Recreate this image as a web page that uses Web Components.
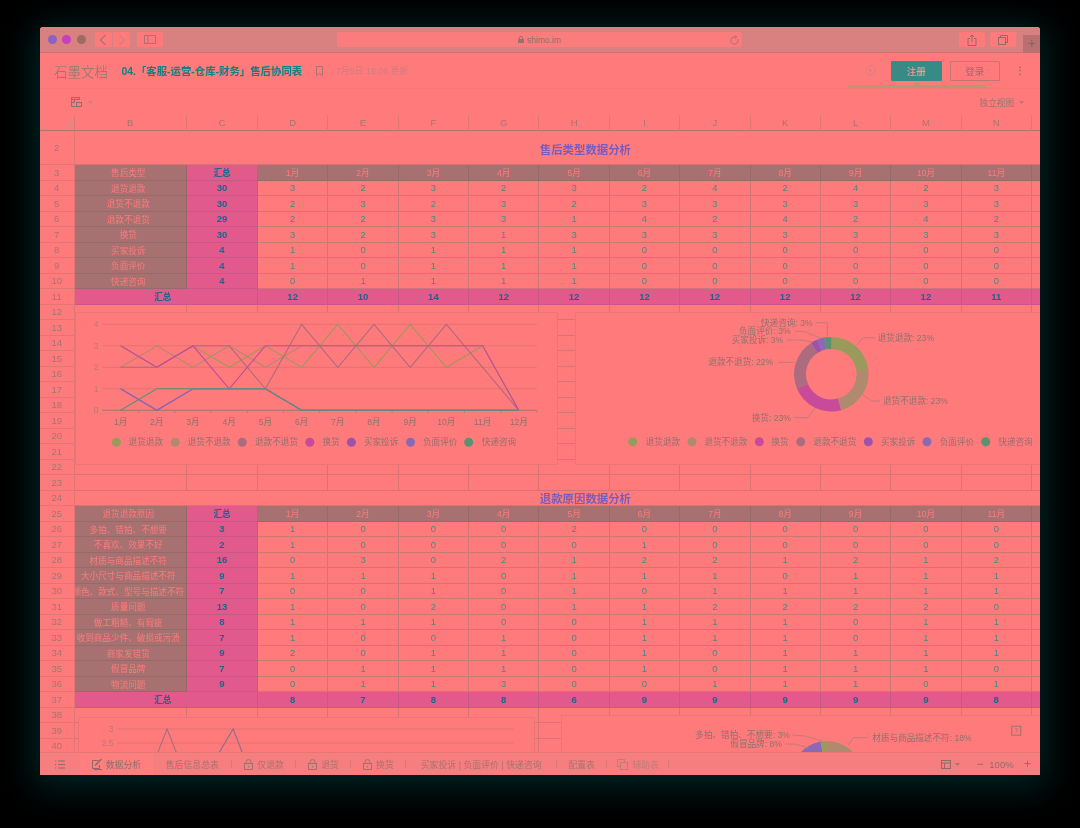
<!DOCTYPE html>
<html lang="zh">
<head>
<meta charset="utf-8">
<title>售后协同表</title>
<style>
  html, body { margin: 0; height: 100%; background: #000; overflow: hidden; }
  body {
    padding: 27px 40px 0;
    box-sizing: border-box;
    font-family: "Liberation Sans", "Noto Sans CJK SC", sans-serif;
  }
</style>
</head>
<body>
<browser-window>
  <safari-bar></safari-bar>
  <doc-header></doc-header>
  <sheet-toolbar></sheet-toolbar>
  <sheet-grid></sheet-grid>
  <sheet-tabs></sheet-tabs>
</browser-window>

<script>
const icons = {
  back: '<svg width="8" height="12" viewBox="0 0 8 12" fill="none" stroke="#a87272" stroke-width="1.2"><path d="M6.5 1 1.5 6l5 5"/></svg>',
  forward: '<svg width="8" height="12" viewBox="0 0 8 12" fill="none" stroke="#cf8080" stroke-width="1.2"><path d="M1.5 1l5 5-5 5"/></svg>',
  sidebar: '<svg width="12" height="10" viewBox="0 0 12 10" fill="none" stroke="#a87272"><rect x=".5" y=".5" width="11" height="8" /><path d="M4 .5v8"/></svg>',
  lock: '<svg width="6" height="7" viewBox="0 0 6 7" fill="#9a7070"><path d="M1 3V2a2 2 0 0 1 4 0v1h1v4H0V3zm1 0h2V2a1 1 0 0 0-2 0z"/></svg>',
  reload: '<svg width="9" height="10" viewBox="0 0 9 10" fill="none" stroke="#a87272"><path d="M7.7 4.2A3.6 3.6 0 1 1 4.5 2h2"/><path d="M5 .5 6.6 2 5 3.5"/></svg>',
  share: '<svg width="10" height="12" viewBox="0 0 10 12" fill="none" stroke="#8f6c6c"><path d="M3 4.5H1v7h8v-7H7M5 8V1M3 2.8 5 1l2 1.8"/></svg>',
  tabs: '<svg width="10" height="10" viewBox="0 0 10 10" fill="none" stroke="#8f6c6c"><rect x=".5" y="2.5" width="7" height="7"/><path d="M2.5 2.5v-2h7v7h-2"/></svg>',
  play: '<svg width="11" height="11" viewBox="0 0 11 11" fill="none" stroke="#d88080"><circle cx="5.5" cy="5.5" r="4.8"/><path d="M4.4 3.6 7 5.5 4.4 7.4z"/></svg>',
  bookmark: '<svg width="7" height="10" viewBox="0 0 7 10" fill="none" stroke="#a87272"><path d="M.5.5h6v9L3.5 7.6.5 9.5z"/></svg>',
  sheet: '<svg width="11" height="10" viewBox="0 0 11 10" fill="none" stroke="#8c7070"><path d="M.5.5h8v2h-8zM.5 2.5v7h4M3.5 2.5v3h-3"/><rect x="5.5" y="5.5" width="5" height="4"/></svg>',
  menu: '<svg width="10" height="9" viewBox="0 0 10 9" fill="none" stroke="#8f6c6c"><path d="M3 1h7M3 4.5h7M3 8h7M0 1h1.2M0 4.5h1.2M0 8h1.2"/></svg>',
  chart: '<svg width="11" height="12" viewBox="0 0 11 12" fill="none" stroke="#8a6c6c"><path d="M6.500 2.500H.5v8h7V7"/><path d="M3 7.500 9.500 1" stroke-width="1.500"/><path d="M2 11.500h8" stroke-width="1"/></svg>',
  padlock: '<svg width="9" height="11" viewBox="0 0 9 11" fill="none" stroke="#a37070"><rect x=".5" y="4.500" width="8" height="6"/><path d="M2 4.500V3a2.500 2.500 0 0 1 5 0v1.500M4.500 7v1.500"/></svg>',
  copy: '<svg width="11" height="11" viewBox="0 0 11 11" fill="none" stroke="#c27a7a"><rect x=".5" y=".5" width="7" height="7"/><rect x="3.500" y="3.500" width="7" height="7" fill="#f67e7e"/></svg>',
  grid: '<svg width="10" height="9" viewBox="0 0 10 9" fill="none" stroke="#8f6c6c"><rect x=".5" y=".5" width="9" height="8"/><path d="M.5 3h9M3.500 3v5.500"/></svg>'
};

const caret = color => `<svg width="5" height="3" viewBox="0 0 5 3" fill="${color}"><path d="M0 0h5L2.500 3z"/></svg>`;

const windowTemplate = document.createElement('template');
windowTemplate.innerHTML = `
  <style>
    :host {
      display: flex;
      flex-direction: column;
      width: 1000px;
      height: 748px;
      background: #ff7b7b;
      overflow: hidden;
      border-radius: 3px 3px 0 0;
      box-shadow: 0 6px 34px 6px #012526;
      filter: blur(.3px);
    }
  </style>
  <slot></slot>
`;

window.customElements.define('browser-window', class BrowserWindow extends HTMLElement {
  constructor() {
    super();
    this.attachShadow({ mode: 'open' }).appendChild(windowTemplate.content.cloneNode(true));
  }
});

const barTemplate = document.createElement('template');
barTemplate.innerHTML = `
  <style>
    :host {
      display: flex;
      align-items: center;
      flex: none;
      height: 26px;
      box-sizing: border-box;
      border-bottom: 1px solid #c87272;
      background: #d98181;
      padding-left: 8px;
      position: relative;
      font-size: 8.500px;
      color: #8f6c6c;
    }
    .light { width: 9px; height: 9px; border-radius: 50%; margin-right: 5.300px; }
    .btn {
      display: flex; align-items: center; justify-content: center;
      height: 15px; background: #ff7b7b; border-radius: 2.500px;
    }
    .address {
      display: flex; align-items: center; justify-content: center; gap: 3px;
      width: 405px; margin-left: 174px; height: 15px; position: relative;
      background: #fa7c7c; border-radius: 2.500px;
    }
    .address svg:last-child { position: absolute; right: 3px; top: 2.500px; }
    .plus {
      position: absolute; right: 0; top: 8px; width: 17px; height: 18px;
      background: #b87070; color: #7f6464; font-size: 14px; line-height: 17px; text-align: center;
    }
  </style>
  <span class="light" style="background:#8a62c2"></span>
  <span class="light" style="background:#c83fbd"></span>
  <span class="light" style="background:#9c6b62;margin-right:9px"></span>
  <span class="btn" style="width:17px">${icons.back}</span>
  <span class="btn" style="width:17px;margin-left:1.500px">${icons.forward}</span>
  <span class="btn" style="width:26px;margin-left:7px">${icons.sidebar}</span>
  <span class="address">${icons.lock}<span>shimo.im</span>${icons.reload}</span>
  <span class="btn" style="width:26px;margin-left:217px">${icons.share}</span>
  <span class="btn" style="width:26px;margin-left:5px">${icons.tabs}</span>
  <span class="plus">+</span>
`;

window.customElements.define('safari-bar', class SafariBar extends HTMLElement {
  constructor() {
    super();
    this.attachShadow({ mode: 'open' }).appendChild(barTemplate.content.cloneNode(true));
  }
});

const headerTemplate = document.createElement('template');
headerTemplate.innerHTML = `
  <style>
    :host {
      display: flex;
      align-items: center;
      flex: none;
      height: 36px;
      box-sizing: border-box;
      border-bottom: 1px solid #f27a7a;
      padding-left: 14px;
      position: relative;
    }
    .logo { font-size: 13.500px; font-weight: 300; color: #7d7a72; width: 67.500px; }
    .title { font-size: 10.400px; font-weight: 700; color: #0f8183; white-space: nowrap; width: 194px; }
    .bookmark { display: flex; width: 20.500px; }
    .date { font-size: 8.850px; color: #cf7d7d; white-space: nowrap; }
    .right { margin-left: auto; display: flex; align-items: center; }
    .watch {
      display: flex; align-items: center; justify-content: center;
      width: 27px; height: 20px; margin-right: 7px; border-radius: 2px; background: #fc7c7c;
    }
    .btn {
      display: flex; align-items: center; justify-content: center; box-sizing: border-box;
      width: 50.500px; height: 20px; font-size: 9.500px; border-radius: 1px;
    }
    .signup { background: #378b86; color: #f59a94; font-weight: 500; }
    .login { margin-left: 8px; border: 1px solid #c47474; color: #8d6f6f; }
    .more { width: 40px; text-align: center; font-size: 10px; color: #8d6f6f; font-weight: 700; line-height: 1; }
    .tip {
      position: absolute; left: 808px; bottom: 0; width: 139px; height: 3px; background: #b39a70;
    }
    .tip::after {
      content: ""; position: absolute; left: 65px; top: -3px;
      border: 4px solid transparent; border-top: 0; border-bottom: 3px solid #b39a70;
    }
  </style>
  <span class="logo">石墨文档</span>
  <span class="title">04.「客服-运营-仓库-财务」售后协同表</span>
  <span class="bookmark">${icons.bookmark}</span>
  <span class="date">7月5日 19:06 更新</span>
  <span class="right">
    <span class="watch">${icons.play}</span>
    <span class="btn signup">注册</span>
    <span class="btn login">登录</span>
    <span class="more">⋮</span>
  </span>
  <span class="tip"></span>
`;

window.customElements.define('doc-header', class DocHeader extends HTMLElement {
  constructor() {
    super();
    this.attachShadow({ mode: 'open' }).appendChild(headerTemplate.content.cloneNode(true));
  }
});

const toolbarTemplate = document.createElement('template');
toolbarTemplate.innerHTML = `
  <style>
    :host {
      display: flex;
      align-items: center;
      flex: none;
      height: 26px;
      padding: 0 16px 0 31px;
      font-size: 8.600px;
      color: #a17070;
    }
    span { display: flex; align-items: center; gap: 6px; }
    .view { margin-left: auto; gap: 5px; }
  </style>
  <span>${icons.sheet}${caret('#c88080')}</span>
  <span class="view">独立视图${caret('#b87676')}</span>
`;

window.customElements.define('sheet-toolbar', class SheetToolbar extends HTMLElement {
  constructor() {
    super();
    this.attachShadow({ mode: 'open' }).appendChild(toolbarTemplate.content.cloneNode(true));
  }
});

const seriesColors = ['#9a9a5c', '#b08a6e', '#ad6b80', '#c84a9a', '#a052aa', '#8a6ab4', '#5a9272'];

// 图表坐标直接用页面坐标，viewBox 偏移到图表框的位置
const svgFrame = (x, y, w, h, body) =>
  `<svg xmlns="http://www.w3.org/2000/svg" width="${w}" height="${h}" viewBox="${x} ${y} ${w} ${h}">${body}</svg>`;

const svgLabel = (x, y, text, extra = '') =>
  `<text x="${x}" y="${y}" dominant-baseline="central" ${extra}>${text}</text>`;

const frameStyle = `
  :host {
    display: block;
    position: absolute;
    box-sizing: border-box;
    background: #ff7b7b;
    border: 1px solid #ea7676;
    overflow: hidden;
  }
  svg { display: block; position: absolute; left: 0; top: 0; }
  text { font-size: 8.600px; fill: #8f7070; }
`;

class ChartBox extends HTMLElement {
  place(x, y, w, h) {
    this.style.left = `${x - 40}px`;
    this.style.top = `${y - 115}px`;
    this.style.width = `${w}px`;
    this.style.height = `${h}px`;
    return [x + 1, y + 1, w, h];
  }
}

window.customElements.define('line-chart', class LineChart extends ChartBox {
  render({ box, legend, series }) {
    const [x, y, w, h] = this.place(...box);
    const { top, unit, ticks, left, step, count, monthY, lineColors } = series;
    const yOf = v => top + (ticks[0] - v) * unit;
    const xOf = i => left + step * (i + 0.5);
    let body = '';
    ticks.forEach(t => {
      body += `<path d="M${left} ${yOf(t)}H${left + step * count}" stroke="#e07474" fill="none"/>`;
      body += svgLabel(left - 4, yOf(t), t, 'text-anchor="end" style="fill:#b97878"');
    });
    if (monthY) {
      body += `<path d="M${left} ${yOf(0)}H${left + step * count}" stroke="#b07272" fill="none"/>`;
      for (let i = 0; i < count; i++) {
        body += `<path d="M${left + step * (i + 1)} ${yOf(0)}v3" stroke="#c87676" fill="none"/>`;
        body += svgLabel(xOf(i), monthY, `${i + 1}月`, 'text-anchor="middle"');
      }
    }
    series.data.forEach((row, s) => {
      const pts = row.map((v, i) => `${xOf(i).toFixed(1)},${yOf(v).toFixed(1)}`).join(' ');
      body += `<polyline points="${pts}" fill="none" stroke="${lineColors[s]}" stroke-width="1.100"/>`;
    });
    legend.forEach(([cx, tx, color, name]) => {
      body += `<circle cx="${cx}" cy="${legend.y}" r="4.500" fill="${color}"/>`;
      body += svgLabel(tx, legend.y, name);
    });
    this.shadowRoot.innerHTML = `<style>${frameStyle}</style>${svgFrame(x, y, w, h, body)}`;
  }

  constructor() {
    super();
    this.attachShadow({ mode: 'open' });
  }
});

const arc = (cx, cy, R, r, a0, a1, color) => {
  const p = (rad, a) => {
    const t = (a - 90) * Math.PI / 180;
    return `${(cx + rad * Math.cos(t)).toFixed(2)} ${(cy + rad * Math.sin(t)).toFixed(2)}`;
  };
  const big = a1 - a0 > 180 ? 1 : 0;
  return `<path fill="${color}" d="M${p(R, a0)}A${R} ${R} 0 ${big} 1 ${p(R, a1)}L${p(r, a1)}A${r} ${r} 0 ${big} 0 ${p(r, a0)}Z"/>`;
};

window.customElements.define('donut-chart', class DonutChart extends ChartBox {
  render({ box, ring, slices, labels, legend, help }) {
    const [x, y, w, h] = this.place(...box);
    const [cx, cy, R, r] = ring;
    let body = '';
    slices.forEach(([a0, a1, color]) => { body += arc(cx, cy, R, r, a0, a1, color); });
    labels.forEach(([tx, ty, text, line]) => {
      body += `<path d="${line}" fill="none" stroke="#c27a7a"/>`;
      body += svgLabel(tx, ty, text);
    });
    (legend || []).forEach(([lx, tx, color, name]) => {
      body += `<circle cx="${lx}" cy="${legend.y}" r="4.500" fill="${color}"/>`;
      body += svgLabel(tx, legend.y, name);
    });
    if (help) {
      body += `<rect x="${help[0] - 4.500}" y="${help[1] - 4.500}" width="9" height="9" fill="none" stroke="#9c7070"/>`;
      body += svgLabel(help[0], help[1], '?', 'text-anchor="middle" style="font-size:7px"');
    }
    this.shadowRoot.innerHTML = `<style>${frameStyle}</style>${svgFrame(x, y, w, h, body)}`;
  }

  constructor() {
    super();
    this.attachShadow({ mode: 'open' });
  }
});

const gridTemplate = document.createElement('template');
gridTemplate.innerHTML = `
  <style>
    :host {
      display: block;
      flex: 1;
      min-height: 0;
      position: relative;
      overflow: hidden;
      font-size: 8.600px;
    }
    .sheet {
      display: grid;
      grid-template-columns: 34.500px 112.500px 71px repeat(12, 70.360px);
      grid-template-rows: 16px 34px repeat(40, 15.500px);
      width: 1100px;
    }
    .sheet > div {
      display: flex;
      align-items: center;
      justify-content: center;
      box-sizing: border-box;
      border-right: 1px solid #d97373;
      border-bottom: 1px solid #d97373;
      white-space: nowrap;
      overflow: hidden;
      min-width: 0;
    }
    .sheet > .head { color: #a67272; font-size: 9.500px; border-color: #e07676; }
    .sheet > .head.col { border-bottom-color: #b07272; }
    .sheet > .corner { border-bottom-color: #b07272; position: relative; }
    .corner::after {
      content: ""; position: absolute; right: 1px; bottom: 1px;
      border-left: 11px solid transparent; border-bottom: 11px solid #ec8383;
    }
    .sheet > .title { grid-column: 2 / -1; padding-right: 5px; font-size: 11.400px; font-weight: 700; color: #7a5cbc; }
    .sheet > .title.first { padding-top: 3px; }
    .sheet > .dark { background: #a87171; color: #ff7a7a; border-color: #976a6a; }
    .sheet > .dark.label { padding-right: 4px; }
    .sheet > .pink { background: #e25a8c; color: #1e6490; font-weight: 700; border-color: #cb5788; font-size: 9.600px; }
    .sheet > .pink.cjk { font-size: 8.600px; }
    .sheet > .merged { grid-column: span 2; padding-right: 6px; }
    .sheet > .num { color: #4e8682; font-size: 9.500px; border-color: #cd7676; }
  </style>
  <div class="sheet"></div>
  <line-chart id="lineA"></line-chart>
  <donut-chart id="pieA"></donut-chart>
  <line-chart id="lineB"></line-chart>
  <donut-chart id="pieB"></donut-chart>
`;

const columns = ['B', 'C', 'D', 'E', 'F', 'G', 'H', 'I', 'J', 'K', 'L', 'M', 'N', ''];

const tableA = {
  head: '售后类型',
  title: '售后类型数据分析',
  rows: [
    ['退货退款', 30, 3, 2, 3, 2, 3, 2, 4, 2, 4, 2, 3],
    ['退货不退款', 30, 2, 3, 2, 3, 2, 3, 3, 3, 3, 3, 3],
    ['退款不退货', 29, 2, 2, 3, 3, 1, 4, 2, 4, 2, 4, 2],
    ['换货', 30, 3, 2, 3, 1, 3, 3, 3, 3, 3, 3, 3],
    ['买家投诉', 4, 1, 0, 1, 1, 1, 0, 0, 0, 0, 0, 0],
    ['负面评价', 4, 1, 0, 1, 1, 1, 0, 0, 0, 0, 0, 0],
    ['快递咨询', 4, 0, 1, 1, 1, 1, 0, 0, 0, 0, 0, 0]
  ],
  total: [12, 10, 14, 12, 12, 12, 12, 12, 12, 12, 11]
};

const tableB = {
  head: '退货退款原因',
  title: '退款原因数据分析',
  rows: [
    ['多拍、错拍、不想要', 3, 1, 0, 0, 0, 2, 0, 0, 0, 0, 0, 0],
    ['不喜欢、效果不好', 2, 1, 0, 0, 0, 0, 1, 0, 0, 0, 0, 0],
    ['材质与商品描述不符', 16, 0, 3, 0, 2, 1, 2, 2, 1, 2, 1, 2],
    ['大小尺寸与商品描述不符', 9, 1, 1, 1, 0, 1, 1, 1, 0, 1, 1, 1],
    ['颜色、款式、型号与描述不符', 7, 0, 0, 1, 0, 1, 0, 1, 1, 1, 1, 1],
    ['质量问题', 13, 1, 0, 2, 0, 1, 1, 2, 2, 2, 2, 0],
    ['做工粗糙、有瑕疵', 8, 1, 1, 1, 0, 0, 1, 1, 1, 0, 1, 1],
    ['收到商品少件、破损或污渍', 7, 1, 0, 0, 1, 0, 1, 1, 1, 0, 1, 1],
    ['商家发错货', 9, 2, 0, 1, 1, 0, 1, 0, 1, 1, 1, 1],
    ['假冒品牌', 7, 0, 1, 1, 1, 0, 1, 0, 1, 1, 1, 0],
    ['物流问题', 9, 0, 1, 1, 3, 0, 0, 1, 1, 1, 0, 1]
  ],
  total: [8, 7, 8, 8, 6, 9, 9, 9, 9, 9, 8]
};

const cell = (cls, text = '') => `<div class="${cls}">${text}</div>`;

const tableRows = (table, firstRow) => {
  let html = cell('head', firstRow) + cell('dark label', table.head) + cell('pink cjk', '汇总');
  for (let m = 1; m <= 11; m++) html += cell('dark', `${m}月`);
  html += cell('dark');
  table.rows.forEach((row, i) => {
    html += cell('head', firstRow + 1 + i) + cell('dark label', row[0]) + cell('pink', row[1]);
    row.slice(2).forEach(v => { html += cell('num', v); });
    html += cell('num');
  });
  html += cell('head', firstRow + 1 + table.rows.length) + cell('pink cjk merged', '汇总');
  table.total.forEach(v => { html += cell('pink', v); });
  html += cell('pink');
  return html;
};

const blankRows = (from, to) => {
  let html = '';
  for (let r = from; r <= to; r++) {
    html += cell('head', r);
    columns.forEach(() => { html += cell('blank'); });
  }
  return html;
};

window.customElements.define('sheet-grid', class SheetGrid extends HTMLElement {
  constructor() {
    super();
    this.attachShadow({ mode: 'open' }).appendChild(gridTemplate.content.cloneNode(true));
  }

  connectedCallback() {
    let html = cell('head col corner');
    columns.forEach(c => { html += cell('head col', c); });
    html += cell('head', 2) + cell('title first', tableA.title);
    html += tableRows(tableA, 3) + blankRows(12, 23);
    html += cell('head', 24) + cell('title', tableB.title);
    html += tableRows(tableB, 25) + blankRows(38, 40);
    this.shadowRoot.querySelector('.sheet').innerHTML = html;

    const names = tableA.rows.map(r => r[0]);
    const legendA = [[116.4, 128.6], [175.2, 187.7], [242.2, 255], [309.8, 322.6], [351.4, 363.9], [410.5, 423], [468.7, 481.8]]
      .map(([c, t], i) => [c, t, seriesColors[i], names[i]]);
    legendA.y = 442.3;

    this.shadowRoot.getElementById('lineA').render({
      box: [75, 312, 483, 153],
      legend: legendA,
      series: {
        top: 324.3, unit: 21.5, ticks: [4, 3, 2, 1, 0], left: 102.5, step: 36.2, count: 12, monthY: 421.7,
        lineColors: seriesColors,
        data: tableA.rows.map(r => r.slice(2).concat(0))
      }
    });

    const order = [0, 1, 3, 2, 4, 5, 6];
    let angle = 0;
    const slices = order.map(i => {
      const start = angle;
      angle += tableA.rows[i][1] / 131 * 360;
      return [start, angle, seriesColors[i]];
    });
    const legendPie = [[632.7, 645.7], [692, 704.3], [759.3, 771.3], [800.7, 813.3], [868.3, 881], [927, 939.7], [985.7, 998.3]]
      .map(([c, t], i) => [c, t, seriesColors[order[i]], names[order[i]]]);
    legendPie.y = 441.7;

    this.shadowRoot.getElementById('pieA').render({
      box: [575, 312, 480, 153],
      ring: [831.3, 374.2, 37.3, 25.3],
      slices,
      labels: [
        [877.7, 337.7, '退货退款: 23%', 'M856.7 345 863 337.7H875'],
        [883, 401, '退货不退款: 23%', 'M863 395 871.7 401H880'],
        [751.7, 417.7, '换货: 23%', 'M815 408 808 417.7H794'],
        [708.3, 362.3, '退款不退货: 22%', 'M794 362.3H778'],
        [731.7, 340, '买家投诉: 3%', 'M813 342 800 340H786'],
        [739, 331.3, '负面评价: 3%', 'M820.7 338 803 331.3H795'],
        [761, 322.7, '快递咨询: 3%', 'M827.3 336.7V322.7H816']
      ],
      legend: legendPie
    });

    const lineData = [
      tableB.rows[2].slice(2).concat(0),
      tableB.rows[10].slice(2).concat(0)
    ];
    const legendNone = [];
    legendNone.y = 0;
    this.shadowRoot.getElementById('lineB').render({
      box: [77.7, 717.3, 457, 120],
      legend: legendNone,
      series: {
        top: 729.3, unit: 28, ticks: [3, 2.5], left: 117.3, step: 33, count: 12,
        lineColors: ['#a96c82', '#8a6c90'],
        data: lineData
      }
    });

    this.shadowRoot.getElementById('pieB').render({
      box: [560.7, 715, 500, 120],
      ring: [826.5, 777, 36, 24],
      slices: [
        [-100, -10, '#8a6ab4'],
        [-10, 0, '#9a9a5c'],
        [0, 120, '#b08a6e']
      ],
      labels: [
        [695, 735, '多拍、错拍、不想要: 3%', 'M792 735 805 736 822 741'],
        [730, 744, '假冒品牌: 8%', 'M785 744 795 744 808 748'],
        [872, 737.7, '材质与商品描述不符: 18%', 'M848 745 853 737.7H868']
      ],
      help: [1016, 730.7]
    });
  }
});

const tabsTemplate = document.createElement('template');
tabsTemplate.innerHTML = `
  <style>
    :host {
      display: flex;
      align-items: stretch;
      flex: none;
      position: relative;
      height: 23px;
      box-sizing: border-box;
      border-top: 1px solid #e47676;
      background: #f67e7e;
      font-size: 8.900px;
      color: #a87272;
    }
    .menu { display: flex; align-items: center; justify-content: center; width: 38px; }
    .tab { display: flex; align-items: center; justify-content: center; gap: 4.500px; position: relative; white-space: nowrap; box-sizing: border-box; }
    .tab:not(.active)::after {
      content: ""; position: absolute; right: 0; top: 7px; bottom: 7px; width: 1px; background: #dc7777;
    }
    .active { background: #ff7f7f; color: #8d6e6e; gap: 3px; }
    .dim { color: #c27a7a; }
    .right { margin-left: auto; display: flex; align-items: center; color: #8f6c6c; }
    .zoom { font-size: 9.500px; width: 36px; margin-right: 4.500px; text-align: center; }
    .glyph { font-size: 12px; line-height: 1; color: #8f6c6c; }
  </style>
  <span class="menu" style="width:40px">${icons.menu}</span>
  <span class="tab active" style="width:73px">${icons.chart}数据分析</span>
  <span class="tab" style="width:78.700px">售后信息总表</span>
  <span class="tab" style="width:64.300px">${icons.padlock}仅退款</span>
  <span class="tab" style="width:54.700px">${icons.padlock}退货</span>
  <span class="tab" style="width:55px">${icons.padlock}换货</span>
  <span class="tab" style="width:151px">买家投诉 | 负面评价 | 快递咨询</span>
  <span class="tab" style="width:50px">配置表</span>
  <span class="tab dim" style="width:62.300px">${icons.copy}辅助表</span>
  <span class="right">
    ${icons.grid}
    <span style="margin:0 16.500px 0 4px;display:flex">${caret('#a87272')}</span>
    <span class="glyph">−</span>
    <span class="zoom">100%</span>
    <span class="glyph" style="margin-right:9px">+</span>
  </span>
`;

window.customElements.define('sheet-tabs', class SheetTabs extends HTMLElement {
  constructor() {
    super();
    this.attachShadow({ mode: 'open' }).appendChild(tabsTemplate.content.cloneNode(true));
  }
});
</script>
</body>
</html>
